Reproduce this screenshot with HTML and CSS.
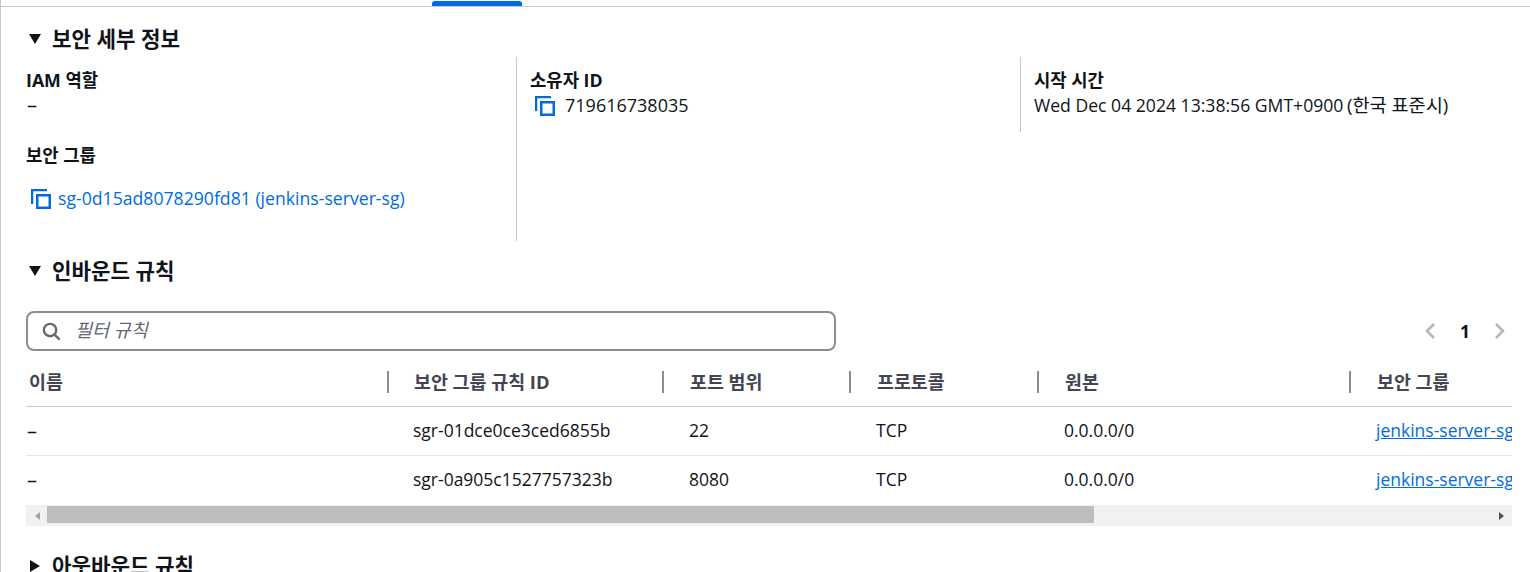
FILE: index.html
```html
<!DOCTYPE html>
<html lang="ko">
<head>
<meta charset="utf-8">
<title>보안 세부 정보</title>
<link rel="stylesheet" href="styles.css">
</head>
<body>
<main class="page">
  <div class="tabbar"><span class="tab-active"></span></div>

  <h2 class="heading heading-first"><span class="caret-down"></span>보안 세부 정보</h2>
  <section class="details">
    <div class="col col-first">
      <div class="label">IAM 역할</div>
      <div class="value"><span class="dash">–</span></div>
      <div class="label label-group">보안 그룹</div>
      <div class="sg-line">
        <svg class="copy" viewBox="0 0 20 20"><path d="M1 15V1H16" /><rect x="6.25" y="6.25" width="12.5" height="12.5" /></svg>
        <a class="link-plain" href="#">sg-0d15ad8078290fd81 (jenkins-server-sg)</a>
      </div>
    </div>
    <div class="col col-short">
      <div class="label">소유자 ID</div>
      <div class="owner-line">
        <svg class="copy" viewBox="0 0 20 20"><path d="M1 15V1H16" /><rect x="6.25" y="6.25" width="12.5" height="12.5" /></svg>
        <span class="value value-num">719616738035</span>
      </div>
    </div>
    <div class="col col-short col-last">
      <div class="label">시작 시간</div>
      <div class="value time">Wed Dec 04 2024 13:38:56 GMT+0900 <span class="tz">(한국 표준시)</span></div>
    </div>
  </section>

  <h2 class="heading heading-in"><span class="caret-down"></span>인바운드 규칙</h2>

  <div class="toolbar">
    <div class="filter">
      <svg class="search" viewBox="0 0 20 20"><circle cx="8.5" cy="8.5" r="6.5"/><path d="M13.5 13.5L18.5 18.5"/></svg>
      <span class="placeholder">필터 규칙</span>
    </div>
    <div class="pager">
      <svg class="chev" viewBox="0 0 12 18"><path d="M10 2L3 9l7 7"/></svg>
      <span class="page-num">1</span>
      <svg class="chev" viewBox="0 0 12 18"><path d="M2 2l7 7-7 7"/></svg>
    </div>
  </div>

  <div class="table">
    <div class="row row-head">
      <div class="cell cell-first">이름</div>
      <div class="cell">보안 그룹 규칙 ID</div>
      <div class="cell">포트 범위</div>
      <div class="cell">프로토콜</div>
      <div class="cell">원본</div>
      <div class="cell cell-last">보안 그룹</div>
    </div>
    <div class="row row-body">
      <div class="cell"><span class="dash">–</span></div>
      <div class="cell">sgr-01dce0ce3ced6855b</div>
      <div class="cell">22</div>
      <div class="cell">TCP</div>
      <div class="cell">0.0.0.0/0</div>
      <div class="cell"><a href="#" class="link">jenkins-server-sg</a></div>
    </div>
    <div class="row row-body row-end">
      <div class="cell"><span class="dash">–</span></div>
      <div class="cell">sgr-0a905c1527757323b</div>
      <div class="cell">8080</div>
      <div class="cell">TCP</div>
      <div class="cell">0.0.0.0/0</div>
      <div class="cell"><a href="#" class="link">jenkins-server-sg</a></div>
    </div>
  </div>

  <div class="scrollbar">
    <span class="arrow-left"></span>
    <span class="thumb"></span>
    <span class="arrow-right"></span>
  </div>

  <h2 class="heading heading-out"><span class="caret-right"></span>아웃바운드 규칙</h2>
</main>
</body>
</html>
```
FILE: styles.css
```css
html, body {
  margin: 0;
  padding: 0;
  background: #fff;
}
body {
  height: 572px;
  overflow: hidden;
  font-family: "Open Sans", "Noto Sans CJK KR", sans-serif;
  font-size: 17.5px;
  color: #16191f;
}
.page {
  height: 572px;
  border-left: 1px solid #c6c6cd;
  padding-left: 25px;
  padding-right: 18px;
  box-sizing: border-box;
  overflow: hidden;
}
.tabbar {
  height: 5px;
  margin-left: -25px;
  margin-right: -18px;
  border-bottom: 1px solid #c6c6cd;
  padding-left: 431px;
  padding-top: 1px;
}
.tab-active {
  display: block;
  width: 90px;
  height: 5px;
  background: #006ce0;
  border-radius: 3px 3px 0 0;
}
.heading {
  margin: 0;
  display: flex;
  align-items: center;
  font-size: 21.2px;
  font-weight: 700;
  line-height: 26px;
  padding-top: 18px;
  padding-left: 1px;
  color: #0f141a;
}
.heading-first {
  padding-top: 19px;
}
.caret-down {
  width: 0;
  height: 0;
  margin-left: 2px;
  margin-right: 11px;
  border-left: 6px solid transparent;
  border-right: 6px solid transparent;
  border-top: 10px solid #0f141a;
}
.caret-right {
  width: 0;
  height: 0;
  margin-left: 3px;
  margin-right: 12px;
  border-top: 6px solid transparent;
  border-bottom: 6px solid transparent;
  border-left: 10px solid #0f141a;
}
.details {
  display: grid;
  grid-template-columns: 491px 504px 1fr;
  align-items: start;
  margin-top: 5px;
}
.col {
  height: 184px;
  border-right: 1px solid #c6c6cd;
  box-sizing: border-box;
  padding-top: 10px;
}
.col-first {
  padding-left: 1px;
}
.col-short {
  height: 75px;
  padding-left: 13px;
}
.col-last {
  border-right: 0;
}
.label {
  font-weight: 700;
  line-height: 26px;
  font-size: 17.75px;
  color: #0f141a;
}
.col-first .label {
  margin-left: -1px;
}
.value {
  line-height: 24px;
  font-size: 17.6px;
  color: #0f141a;
}
.value-num {
  font-size: 18px;
}
.dash {
  font-size: 20px;
}
.time {
  white-space: nowrap;
}
.tz {
  font-size: 18.6px;
  margin-left: -1px;
}
.label-group {
  margin-top: 25px;
}
.sg-line {
  display: flex;
  align-items: center;
  gap: 7px;
  margin-top: 17px;
  padding-left: 4px;
  height: 26px;
}
.owner-line {
  display: flex;
  align-items: center;
  gap: 10px;
  padding-left: 5px;
  height: 24px;
}
.copy {
  width: 20px;
  height: 20px;
  fill: none;
  stroke: #006ce0;
  stroke-width: 2.5;
  flex: none;
  margin-top: 2px;
}
.link-plain {
  color: #006ce0;
  text-decoration: none;
  font-size: 17.65px;
  line-height: 26px;
  white-space: nowrap;
}
.heading-in {
  padding-top: 17px;
}
.toolbar {
  display: flex;
  justify-content: space-between;
  align-items: center;
  margin-top: 27px;
}
.filter {
  width: 810px;
  height: 40px;
  box-sizing: border-box;
  border: 2px solid #8c8c94;
  border-radius: 8px;
  display: flex;
  align-items: center;
  padding-left: 14px;
  gap: 14px;
}
.search {
  width: 19px;
  height: 19px;
  fill: none;
  stroke: #656871;
  stroke-width: 2.5;
}
.placeholder {
  font-style: italic;
  color: #656871;
  font-size: 18.5px;
  margin-bottom: 4px;
}
.pager {
  display: flex;
  align-items: center;
  gap: 24px;
  padding-right: 6px;
}
.chev {
  width: 12px;
  height: 18px;
  fill: none;
  stroke: #b4b4bb;
  stroke-width: 2.5;
}
.page-num {
  font-weight: 700;
  font-size: 17.5px;
  color: #0f141a;
}
.table {
  margin-top: 11px;
  overflow: hidden;
}
.row {
  display: grid;
  grid-template-columns: 374px 276px 187px 188px 312px 1fr;
}
.row-head {
  align-items: center;
  border-bottom: 1px solid #c6c6cd;
  font-weight: 700;
  font-size: 18.4px;
  color: #424650;
  padding-bottom: 5px;
  height: 39px;
}
.row-head .cell {
  border-right: 2px solid #8c8c94;
  height: 22px;
  line-height: 22px;
  box-sizing: border-box;
  white-space: nowrap;
}
.row-head .cell-first {
  padding-left: 3px;
  width: 363px;
}
.row-head .cell:not(.cell-first) {
  padding-left: 14px;
  width: calc(100% - 12px);
}
.row-head .cell-last {
  border-right: 0;
}
.row-body {
  height: 49px;
  box-sizing: border-box;
  padding-bottom: 2px;
  align-items: center;
  border-bottom: 1px solid #e8e8ea;
  color: #0f141a;
  font-size: 17.5px;
}
.row-body .cell {
  padding-left: 13px;
  white-space: nowrap;
}
.row-body .cell:first-child {
  padding-left: 1px;
}
.row-end {
  border-bottom: 0;
  height: 49px;
  padding-bottom: 3px;
}
.link {
  color: #006ce0;
}
.scrollbar {
  height: 21px;
  background: #f1f1f1;
  display: flex;
  align-items: center;
}
.thumb {
  display: block;
  width: 1047px;
  height: 17px;
  margin-bottom: 2px;
  background: #bdbdbd;
}
.arrow-left {
  width: 0;
  height: 0;
  margin-left: 9px;
  margin-right: 7px;
  border-top: 4px solid transparent;
  border-bottom: 4px solid transparent;
  border-right: 5px solid #a3a3a3;
}
.arrow-right {
  width: 0;
  height: 0;
  margin-left: auto;
  margin-right: 8px;
  border-top: 4px solid transparent;
  border-bottom: 4px solid transparent;
  border-left: 5px solid #505050;
}
.heading-out {
  padding-top: 27px;
}
```
